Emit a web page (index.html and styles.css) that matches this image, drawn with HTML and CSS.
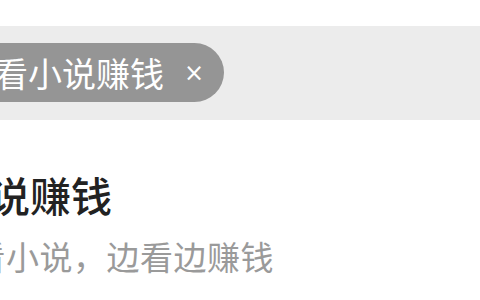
FILE: index.html
```html
<!DOCTYPE html>
<html lang="zh-CN">
<head>
<meta charset="utf-8">
<link rel="stylesheet" href="styles.css">
</head>
<body>
<div class="page">
  <div class="topbar"></div>
  <div class="tagbar">
    <div class="chip">
      <span class="chip-text">看小说赚钱</span>
      <span class="chip-close">×</span>
    </div>
  </div>
  <div class="info">
    <div class="title">看小说赚钱</div>
    <div class="subtitle">边看小说，边看边赚钱</div>
  </div>
</div>
</body>
</html>
```
FILE: styles.css
```css
html, body {
  margin: 0;
  padding: 0;
  background: #ffffff;
  overflow: hidden;
}
.page {
  width: 480px;
  height: 300px;
  font-family: "Noto Sans CJK SC", "Noto Sans", sans-serif;
  overflow: hidden;
}
.topbar {
  height: 26px;
  background: #ffffff;
}
.tagbar {
  height: 94px;
  background: #ececec;
  box-sizing: border-box;
  padding-top: 17px;
}
.chip {
  display: inline-flex;
  align-items: center;
  height: 59px;
  margin-left: -40px;
  padding: 0 20px 0 34px;
  background: #959595;
  border-radius: 30px;
  color: #ffffff;
}
.chip-text {
  font-size: 34px;
  line-height: 1;
}
.chip-close {
  font-family: "DejaVu Sans", sans-serif;
  font-size: 24px;
  line-height: 1;
  margin-left: 20px;
}
.info {
  padding-top: 50px;
}
.title {
  margin-left: -93px;
  font-size: 41px;
  line-height: 48px;
  font-weight: 500;
  color: #222222;
}
.subtitle {
  margin-top: 18px;
  margin-left: -61px;
  font-size: 33px;
  line-height: 40px;
  color: #9a9a9a;
  letter-spacing: 0.5px;
}
```
